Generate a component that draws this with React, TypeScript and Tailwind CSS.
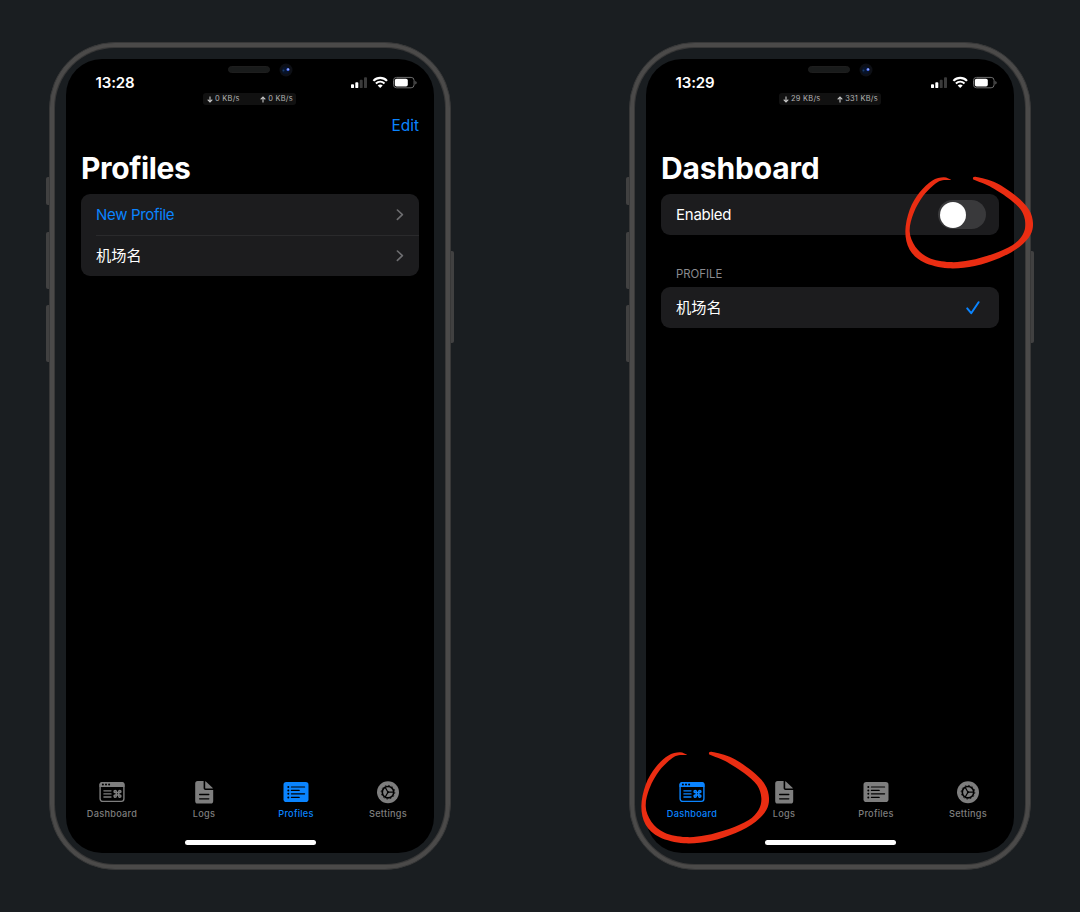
import type { ReactNode } from "react";

type TabName = "Dashboard" | "Logs" | "Profiles" | "Settings";

function DashboardIcon() {
  return (
    <svg width="26" height="24" viewBox="0 0 26 24" fill="none">
      <rect x="1.1" y="2.6" width="23.8" height="18.8" rx="2.6" stroke="currentColor" strokeWidth="1.4" />
      <path d="M0.5 7V4.4C0.5 2.9 1.6 2 3 2H23C24.4 2 25.5 2.9 25.5 4.4V7Z" fill="currentColor" />
      <g fill="#000">
        <circle cx="3.9" cy="4.5" r="1" />
        <circle cx="7" cy="4.5" r="1" />
        <circle cx="10.1" cy="4.5" r="1" />
      </g>
      <path d="M4.9 10.8H12M4.9 13.9H12M4.9 17H12" stroke="currentColor" strokeWidth="1.3" strokeLinecap="round" />
      <path
        d="M17.3 12.6H19.7V15H17.3ZM17.3 12.6H16.2A1.1 1.1 0 1 1 17.3 11.5ZM19.7 12.6V11.5A1.1 1.1 0 1 1 20.8 12.6ZM19.7 15H20.8A1.1 1.1 0 1 1 19.7 16.1ZM17.3 15V16.1A1.1 1.1 0 1 1 16.2 15Z"
        stroke="currentColor"
        strokeWidth="1.5"
      />
    </svg>
  );
}

function LogsIcon() {
  return (
    <svg width="26" height="24" viewBox="0 0 26 24" fill="none">
      <path
        d="M4.2 3.6C4.2 1.9 5 1 6.7 1H12.6V8.1C12.6 9.3 13.2 9.9 14.4 9.9H22.2V21C22.2 22.7 21.4 23.6 19.7 23.6H6.7C5 23.6 4.2 22.7 4.2 21Z"
        fill="currentColor"
      />
      <path d="M14.2 1.2C14.6 1.4 15 1.7 15.4 2.1L21 7.2C21.4 7.6 21.7 8 21.9 8.5H14.8C14.4 8.5 14.2 8.3 14.2 7.9Z" fill="currentColor" />
      <path d="M8.6 14.5H17.8M8.6 18.8H17.8" stroke="#000" strokeWidth="1.3" strokeLinecap="round" />
    </svg>
  );
}

function ProfilesIcon() {
  return (
    <svg width="26" height="24" viewBox="0 0 26 24" fill="none">
      <rect x="0.5" y="2" width="25" height="20" rx="2.8" fill="currentColor" />
      <path
        d="M8.4 7H21.6M8.4 10.4H16.2M8.4 13.8H21.6M8.4 17.4H16.2"
        stroke="#000"
        strokeWidth="1.2"
        strokeLinecap="round"
      />
      <g fill="#000">
        <circle cx="5.3" cy="7" r="1" />
        <circle cx="5.3" cy="10.4" r="1" />
        <circle cx="5.3" cy="13.8" r="1" />
        <circle cx="5.3" cy="17.4" r="1" />
      </g>
    </svg>
  );
}

function SettingsIcon() {
  return (
    <svg width="26" height="24" viewBox="0 0 26 24" fill="none">
      <circle cx="13" cy="12.2" r="11" fill="currentColor" />
      <circle cx="13" cy="12.2" r="5.7" stroke="#000" strokeWidth="1.6" />
      <circle cx="13" cy="12.2" r="6.8" stroke="#000" strokeWidth="0.8" strokeDasharray="1.6 1.96" />
      <path d="M13.6 12.2H18.6M12.7 11.7L10.2 7.4M12.7 12.7L10.2 17" stroke="#000" strokeWidth="1.2" />
      <circle cx="13" cy="12.2" r="1.1" fill="#000" />
    </svg>
  );
}

const tabs: { name: TabName; icon: ReactNode }[] = [
  { name: "Dashboard", icon: <DashboardIcon /> },
  { name: "Logs", icon: <LogsIcon /> },
  { name: "Profiles", icon: <ProfilesIcon /> },
  { name: "Settings", icon: <SettingsIcon /> },
];

function TabBar({ active }: { active: TabName }) {
  return (
    <nav className="grid grid-cols-4">
      {tabs.map((tab) => (
        <div
          key={tab.name}
          className={`flex flex-col items-center ${tab.name === active ? "text-[#0a84ff]" : "text-[#7e7e7e]"}`}
        >
          {tab.icon}
          <span className="mt-1 text-[9.2px] leading-[11px] font-medium tracking-[0.28px]">{tab.name}</span>
        </div>
      ))}
    </nav>
  );
}

function StatusIcons() {
  return (
    <svg width="68" height="14" viewBox="0 0 68 14" fill="none">
      <rect x="1" y="8.2" width="3" height="3.9" rx="0.9" fill="#fff" />
      <rect x="5.3" y="6.2" width="3" height="5.9" rx="0.9" fill="#fff" />
      <rect x="9.7" y="3.8" width="3" height="8.3" rx="0.9" fill="#3a3a3a" />
      <rect x="14" y="1.3" width="3" height="10.8" rx="0.9" fill="#3a3a3a" />
      <path d="M23.4 4.9C27.2 0.9 33.2 0.9 37 4.9" stroke="#fff" strokeWidth="2.1" />
      <path d="M25.9 7.5C28.3 5 32.1 5 34.5 7.5" stroke="#fff" strokeWidth="1.9" />
      <path d="M27.7 9.5C29.2 8.1 31.2 8.1 32.7 9.5L30.2 12Z" fill="#fff" />
      <rect x="43.5" y="1.4" width="20.6" height="10.4" rx="3" stroke="#6c6c6c" />
      <rect x="44.8" y="2.7" width="13" height="7.8" rx="1.8" fill="#fff" />
      <path d="M65.4 5C67 5.6 67 7.8 65.4 8.4Z" fill="#6c6c6c" />
    </svg>
  );
}

function Arrow({ up }: { up?: boolean }) {
  return (
    <svg width="6" height="7" viewBox="0 0 6 7" fill="none" className={up ? "rotate-180" : ""}>
      <path d="M3 0.6V5.8M0.7 3.6L3 5.9L5.3 3.6" stroke="#c8c8c8" strokeWidth="1.1" />
    </svg>
  );
}

function Chevron() {
  return (
    <svg width="8" height="12" viewBox="0 0 8 12" fill="none">
      <path d="M1.4 1L6.4 5.7L1.4 10.4" stroke="#6d6d70" strokeWidth="1.6" strokeLinecap="round" strokeLinejoin="round" />
    </svg>
  );
}

type Point = [number, number];

function smooth(points: Point[]) {
  let d = `M${points[0][0]} ${points[0][1]}`;
  for (let i = 0; i < points.length - 1; i++) {
    const p0 = points[Math.max(0, i - 1)];
    const p1 = points[i];
    const p2 = points[i + 1];
    const p3 = points[Math.min(points.length - 1, i + 2)];
    d += `C${p1[0] + (p2[0] - p0[0]) / 6} ${p1[1] + (p2[1] - p0[1]) / 6} ${p2[0] - (p3[0] - p1[0]) / 6} ${p2[1] - (p3[1] - p1[1]) / 6} ${p2[0]} ${p2[1]}`;
  }
  return d + "Z";
}

const ringOutline: Point[] = [
  [275, 61], [252, 53], [217, 63], [180, 98], [150, 150], [137, 215], [150, 270], [192, 308], [265, 326],
  [345, 319], [420, 295], [480, 261], [512, 226], [520, 190], [508, 150], [470, 110], [410, 70], [350, 52],
  [340, 58], [352, 64], [390, 80], [445, 115], [484, 151], [497, 190], [489, 225], [458, 257], [400, 283],
  [330, 302], [270, 307], [207, 294], [167, 261], [150, 215], [162, 160], [192, 107], [230, 70], [252, 61],
];

function HandDrawnRing({ className }: { className: string }) {
  return (
    <svg className={`absolute ${className}`} width="140" height="110" viewBox="121 31 420 330">
      <path d={smooth(ringOutline)} fill="#ea2d12" />
    </svg>
  );
}

interface PhoneProps {
  time: string;
  down: string;
  up: string;
  badge: string;
  title: string;
  titleClass: string;
  action?: string;
  active: TabName;
  children: ReactNode;
  overlay?: ReactNode;
}

function Phone({ time, down, up, badge, title, titleClass, action, active, children, overlay }: PhoneProps) {
  return (
    <section className="relative h-[828px] w-[402px] rounded-[66px] border border-[#383838] bg-[#4a4a4a] p-px">
      <i className="absolute -left-[4px] top-[134px] h-7 w-[3px] rounded-l-[2px] bg-[#414141]" />
      <i className="absolute -left-[4px] top-[189px] h-[57px] w-[3px] rounded-l-[2px] bg-[#414141]" />
      <i className="absolute -left-[4px] top-[262px] h-[57px] w-[3px] rounded-l-[2px] bg-[#414141]" />
      <i className="absolute -right-[4px] top-[208px] h-[92px] w-[3px] rounded-r-[2px] bg-[#414141]" />
      <div className="h-full rounded-[64px] border-[3px] border-[#4b4a49] bg-[#383838] p-px">
        <div className="h-full rounded-[60px] bg-[#191d20] p-[11px]">
          <div className="flex h-full flex-col rounded-[36px] bg-black text-white">
            <header className="relative flex h-[47px] justify-between pl-[29.5px] pr-[16px] pt-[15px]">
              <span className="text-[15px] leading-[18px] font-semibold tracking-[-0.1px]">{time}</span>
              <div className="pt-[2px]">
                <StatusIcons />
              </div>
              <div className="absolute left-[162px] top-[7px] h-[7px] w-[42px] rounded-full border border-[#1e1e1e] bg-[#191b1b]" />
              <svg className="absolute left-[213px] top-[4px]" width="14" height="14" viewBox="0 0 14 14">
                <circle cx="7" cy="7" r="6.5" fill="#0d0f15" />
                <circle cx="6.6" cy="7.2" r="3.8" fill="#07132b" />
                <circle cx="4.5" cy="7.5" r="1" fill="#1a3d6b" />
                <circle cx="9" cy="6.4" r="1.5" fill="#4b6cf5" />
                <circle cx="9.1" cy="6.3" r="0.7" fill="#c9d6ff" />
              </svg>
              <div
                className={`absolute top-[34px] flex h-[12px] items-center justify-between rounded-[3px] bg-[#111111] pr-[3px] pl-[4px] text-[7.4px] leading-none tracking-[0.28px] text-[#b5b5b5] ${badge}`}
              >
                <span className="flex items-center gap-[2px]">
                  <Arrow />
                  {down} KB/s
                </span>
                <span className="flex items-center gap-[2px]">
                  <Arrow up />
                  {up} KB/s
                </span>
              </div>
            </header>
            <div className="flex h-[39px] items-center justify-end pr-[15px] text-[15.4px] text-[#0a84ff]">{action}</div>
            <h1 className={`h-[49px] pl-[15px] pt-[5px] text-[30px] leading-[36px] font-bold ${titleClass}`}>{title}</h1>
            <div className="flex-1 px-[15px] text-[15px]">{children}</div>
            <TabBar active={active} />
            <div className="flex h-[34px] justify-center pt-[21px]">
              <div className="h-[5px] w-[131px] rounded-full bg-white" />
            </div>
          </div>
        </div>
      </div>
      {overlay}
    </section>
  );
}

export default function App() {
  return (
    <main className="flex h-[912px] w-[1080px] gap-[178px] overflow-hidden bg-[#1a1e21] pl-[49px] pt-[42px] font-['Inter','Noto_Sans_CJK_SC',sans-serif]">
      <Phone
        time="13:28"
        down="0"
        up="0"
        badge="left-[137px] w-[93px]"
        title="Profiles"
        titleClass="tracking-[-0.36px]"
        action="Edit"
        active="Profiles"
      >
        <div className="h-[82px] rounded-[9px] bg-[#1c1c1e] pl-[15px]">
          <div className="flex h-[42px] items-center justify-between border-b border-[#2a2a2c] pr-[15px] text-[#0a84ff]">
            <span className="pt-px tracking-[-0.32px]">New Profile</span>
            <Chevron />
          </div>
          <div className="flex h-[40px] items-center justify-between pr-[15px]">
            <span className="pt-px text-[15.2px]">机场名</span>
            <Chevron />
          </div>
        </div>
      </Phone>
      <Phone
        time="13:29"
        down="29"
        up="331"
        badge="left-[133px] w-[102px]"
        title="Dashboard"
        titleClass="tracking-[-0.16px]"
        active="Dashboard"
        overlay={
          <>
            <HandDrawnRing className="left-[270px] top-[127px]" />
            <HandDrawnRing className="left-[6px] top-[702px]" />
          </>
        }
      >
        <div className="flex h-[41px] items-center justify-between rounded-[9px] bg-[#1c1c1e] pl-[15px] pr-[13px]">
          <span className="pt-px tracking-[-0.25px]">Enabled</span>
          <div className="h-[29px] w-[48px] rounded-full bg-[#39393b] p-[1.5px]">
            <div className="size-[26px] rounded-full bg-white" />
          </div>
        </div>
        <h2 className="mt-[31px] h-[21px] pl-[15px] pt-px text-[11.4px] leading-[15px] text-[#8b8b90]">PROFILE</h2>
        <div className="flex h-[41px] items-center justify-between rounded-[9px] bg-[#1c1c1e] pl-[15px] pr-[18px]">
          <span className="pt-px text-[15.2px]">机场名</span>
          <svg width="16" height="15" viewBox="0 0 16 15" fill="none">
            <path d="M2.2 8.4L6.2 13.2L13.6 2.2" stroke="#0a84ff" strokeWidth="2" strokeLinecap="round" strokeLinejoin="round" />
          </svg>
        </div>
      </Phone>
    </main>
  );
}
